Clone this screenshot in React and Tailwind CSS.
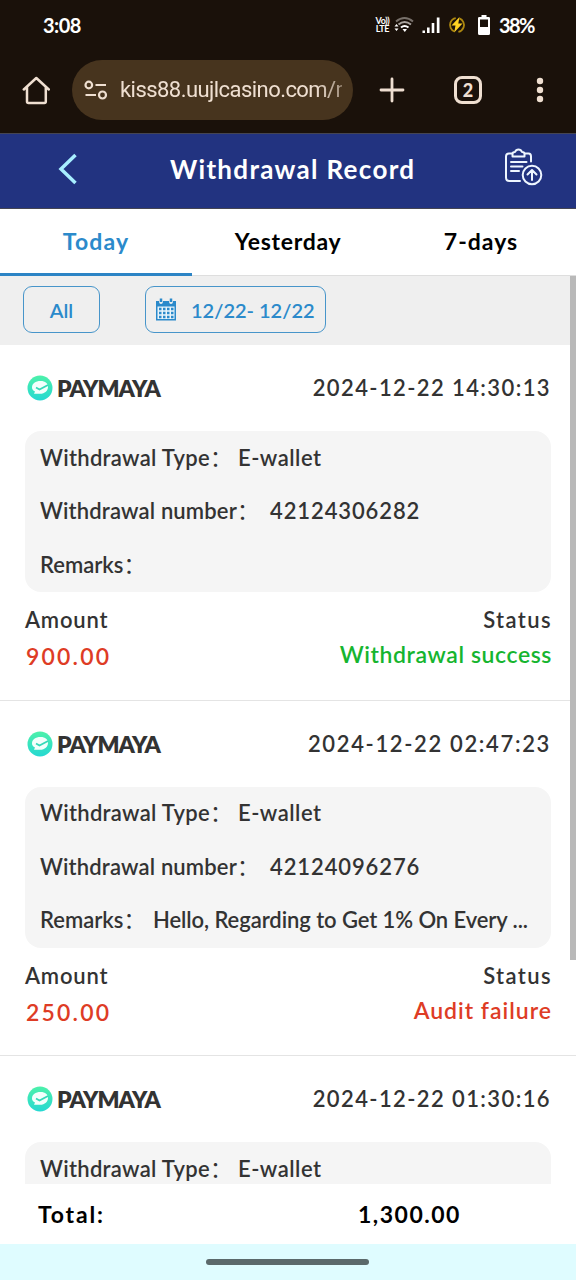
import React from 'react';

const records = [
  {
    time: '2024-12-22 14:30:13',
    timeClass: 'tracking-[1.4px]',
    number: '42124306282',
    remarks: '',
    amount: '900.00',
    status: 'Withdrawal success',
    statusClass: 'text-[#16b52f] tracking-[0.6px]',
  },
  {
    time: '2024-12-22 02:47:23',
    timeClass: 'tracking-[1.65px]',
    number: '42124096276',
    remarks: 'Hello, Regarding to Get 1% On Every ...',
    amount: '250.00',
    status: 'Audit failure',
    statusClass: 'text-[#de3c25] tracking-[1px]',
  },
  {
    time: '2024-12-22 01:30:16',
    timeClass: 'tracking-[1.4px]',
  },
];

const StatusBar = () => (
  <div className="flex h-[50px] shrink-0 items-center justify-between pl-[43px] pr-[42px] text-white">
    <span className="text-[20px] leading-6 font-bold tracking-[-0.5px]">3:08</span>
    <div className="flex items-center">
      <div className="flex w-[17px] flex-col items-center text-[9px] leading-[8px] font-bold tracking-[-0.4px]">
        <span>Vo))</span>
        <span>LTE</span>
      </div>
      <svg className="ml-[3px]" width="20" height="18" viewBox="0 0 20 18" fill="none" strokeWidth="2">
        <path d="M2 5.500Q10.500-1.500 19 5.500" stroke="#77706a" />
        <path d="M4.500 8.500Q10.500 3.500 17 8.500" stroke="#aaa49f" />
        <path d="M7 11.500Q10.500 8.500 14.500 11.500" stroke="#fff" />
        <path d="M8.500 13h4.500l-2.200 3z" fill="#fff" />
        <path d="M0.500 10.500 2.500 8l2 2.500zM0.500 12.500h4l-2 2.500z" fill="#fff" />
      </svg>
      <svg className="ml-[8px]" width="18" height="17" viewBox="0 0 18 17" fill="#fff">
        <path d="M0.500 13.500h2.500V16H0.500zM5 10.500h2.600V16H5zM9.700 6h2.600v10H9.700zM14.800 0.500h2.700V16h-2.700z" />
      </svg>
      <svg className="ml-[8px]" width="18" height="18" viewBox="0 0 18 18">
        <circle cx="9" cy="9" r="7" fill="none" stroke="#ae8810" strokeWidth="1.800" strokeDasharray="18 4" transform="rotate(-70 9 9)" />
        <path d="m11.500 1-8 8.500h4L6.200 16.500l8.300-9h-4.200z" fill="#ffd323" />
      </svg>
      <svg className="ml-[11px]" width="14" height="20" viewBox="0 0 14 20">
        <path d="M4.500 0h5v2h2.300q1.200 0 1.200 1.200v15.300q0 1.500-1.500 1.500h-9Q1 20 1 18.500V3.200Q1 2 2.200 2h2.300z" fill="#fff" />
        <path d="M3 4.500h8V12H3z" fill="#1a110a" />
      </svg>
      <span className="ml-[8px] text-[20px] leading-6 font-bold tracking-[-1.5px]">38%</span>
    </div>
  </div>
);

const BrowserBar = () => (
  <div className="flex h-[83px] shrink-0 items-start px-[22px] pt-[10px] text-[#efdfd1]">
    <svg className="mt-[16px]" width="28" height="29" viewBox="0 0 28 29" fill="none" stroke="currentColor" strokeWidth="2.500" strokeLinejoin="round" strokeLinecap="round">
      <path d="M1.800 13.500 14.300 2l12.500 11.500M5 11v14.500Q5 27 6.500 27h15.800q1.500 0 1.500-1.500V11" />
    </svg>
    <div className="ml-[22px] flex h-[60px] w-[281px] items-center rounded-full bg-[#47341e] pl-[12px] pr-[11px]">
      <svg className="shrink-0" width="24" height="20" viewBox="0 0 24 20" fill="none" stroke="currentColor" strokeWidth="2.200">
        <circle cx="4.800" cy="5" r="3.300" />
        <path d="M11.500 5H22M1.500 15h10.500" />
        <circle cx="18.500" cy="15" r="3.500" />
      </svg>
      <div className="ml-[12px] overflow-hidden font-[Roboto,sans-serif] text-[22px] leading-8 tracking-[-0.55px] whitespace-nowrap [mask-image:linear-gradient(to_right,#000_88%,#0008)]">
        kiss88.uujlcasino.com/m
      </div>
    </div>
    <svg className="mt-[17px] ml-[26px]" width="26" height="26" viewBox="0 0 26 26" fill="none" stroke="currentColor" strokeWidth="2.800" strokeLinecap="round">
      <path d="M13 2v22M2 13h22" />
    </svg>
    <div className="mt-[16px] ml-[49px] flex size-[28px] items-center justify-center rounded-[8px] border-[3px] border-current text-[18px] font-black">
      2
    </div>
    <svg className="mt-[17px] ml-[54px]" width="8" height="27" viewBox="0 0 8 27" fill="currentColor">
      <circle cx="4" cy="4" r="3.200" />
      <circle cx="4" cy="13" r="3.200" />
      <circle cx="4" cy="22" r="3.200" />
    </svg>
  </div>
);

const PageHeader = () => (
  <div className="flex h-[76px] shrink-0 items-center border-y border-[#454552] bg-[#223380] pb-[4px] text-white">
    <svg className="ml-[57px]" width="21" height="32" viewBox="0 0 21 32" fill="none" stroke="#a8efff" strokeWidth="3.500">
      <path d="M18.500 2 4 16l14.500 14" />
    </svg>
    <h1 className="ml-[92px] w-[250px] text-[26px] leading-8 font-bold tracking-[1.3px] whitespace-nowrap">Withdrawal Record</h1>
    <svg className="mb-[4px] ml-[84px]" width="39" height="38" viewBox="0 0 39 38" fill="none" stroke="#eef6ff" strokeWidth="2" strokeLinecap="round" strokeLinejoin="round">
      <path d="M8 5.500H5Q2 5.500 2 8.500v21q0 3.500 3.500 3.500H16M21 5.500h3.500q2.500 0 2.500 3v5" />
      <path d="M8.500 8.500V6q0-2 2.500-2 1-2.500 3.500-2.500T18 4q2.500 0 2.500 2v2.500z" />
      <path d="M7 14h15.500M7 18.500h11.500M7 23h8" />
      <circle cx="28" cy="27" r="9.300" />
      <path d="M28 32v-9.500M23.500 26.500 28 22l4.500 4.500" />
    </svg>
  </div>
);

const Tabs = () => (
  <div className="grid h-[67px] shrink-0 grid-cols-3 border-b border-[#dedede] bg-white text-center text-[23px] font-bold text-black">
    <div className="-mb-px border-b-[3px] border-[#2c84c5] pt-[16px] leading-8 tracking-[1.1px] text-[#2b8acb]">Today</div>
    <div className="pt-[16px] leading-8 tracking-[0.7px]">Yesterday</div>
    <div className="pt-[16px] pl-[2px] leading-8 tracking-[1px]">7-days</div>
  </div>
);

const Filters = () => (
  <div className="flex h-[69px] shrink-0 items-start bg-[#efefef] pt-[10px] pl-[23px] text-[20px] font-semibold text-[#2b8acb]">
    <div className="flex h-[47px] w-[77px] items-center justify-center rounded-[9px] border border-[#4795ca]">All</div>
    <div className="ml-[45px] flex h-[47px] w-[181px] items-center rounded-[9px] border border-[#4795ca] pl-[9px]">
      <svg className="shrink-0" width="22" height="25" viewBox="0 0 22 25">
        <path d="M1 4h3q0 3 2 3t2-3h6q0 3 2 3t2-3h3v19.500H1z" fill="#2b8acb" />
        <path d="M6 1.500v3.500M16 1.500v3.500" stroke="#2b8acb" strokeWidth="2.500" />
        <path d="M2.500 9.500h17V22h-17z" fill="#e8f4fb" />
        <path d="M4 12h14.500M4 16h14.500M4 20h14.500" stroke="#2b8acb" strokeWidth="2.500" strokeDasharray="2.500 1.500" />
      </svg>
      <span className="ml-[14px] whitespace-nowrap">12/22- 12/22</span>
    </div>
  </div>
);

const WalletLogo = () => (
  <svg width="26" height="26" viewBox="0 0 26 26">
    <defs>
      <linearGradient id="wallet" x2="0" y2="1">
        <stop stopColor="#4df1aa" />
        <stop offset="1" stopColor="#25d8d2" />
      </linearGradient>
    </defs>
    <circle cx="13" cy="13" r="12.500" fill="url(#wallet)" />
    <path d="M13.500 6c5 0 7.500 2.500 7.500 6s-3 6.800-8 6.800H7l1-2.300c-2-.8-3-2.300-3-4C5 8.500 8.500 6 13.500 6z" fill="#f2fffc" />
    <path d="m9 12.500 3.500 2L21 10" fill="none" stroke="#36d9b8" strokeWidth="1.800" />
  </svg>
);

const Colon = () => <span className="font-normal">：</span>;

const Record = ({ record }) => (
  <div className="h-[355.500px] shrink-0 border-b border-[#e4e4e4] px-[25px] text-[22px] leading-7 font-semibold text-[#333]">
    <div className="flex h-[86px] items-center justify-between pl-[2px]">
      <div className="flex items-center gap-[4px]">
        <WalletLogo />
        <span className="text-[23px] font-extrabold tracking-[-1px]">PAYMAYA</span>
      </div>
      <span className={`whitespace-nowrap ${record.timeClass}`}>{record.time}</span>
    </div>
    <div className="flex h-[161px] flex-col rounded-[16px] bg-[#f5f5f5] pl-[15px] whitespace-nowrap">
      <div className="flex h-[53.500px] items-center">
        <span className="w-[198px] shrink-0 tracking-[0.3px]">Withdrawal Type<Colon /></span>
        <span className="tracking-[0.5px]">E-wallet</span>
      </div>
      {record.number && (
        <>
          <div className="flex h-[53.500px] items-center">
            <span className="w-[230px] shrink-0 tracking-[0.15px]">Withdrawal number<Colon /></span>
            <span className="tracking-[0.9px]">{record.number}</span>
          </div>
          <div className="flex h-[53.500px] items-center">
            <span className="w-[113px] shrink-0">Remarks<Colon /></span>
            <span className="tracking-[-0.08px]">{record.remarks}</span>
          </div>
        </>
      )}
    </div>
    {record.status && (
      <div className="flex justify-between pt-[14px]">
        <div>
          <div className="tracking-[0.8px]">Amount</div>
          <div className="pt-[8px] pl-px text-[23px] tracking-[2.2px] text-[#de3c25]">{record.amount}</div>
        </div>
        <div className="-mr-px text-right">
          <div className="tracking-[1.4px]">Status</div>
          <div className={`pt-[6px] text-[23px] ${record.statusClass}`}>{record.status}</div>
        </div>
      </div>
    )}
  </div>
);

export default function App() {
  return (
    <div className="flex h-[1280px] w-[576px] flex-col overflow-hidden bg-[#1a110a] font-[Lato,'Noto_Sans_CJK_SC',sans-serif]">
      <StatusBar />
      <BrowserBar />
      <PageHeader />
      <Tabs />
      <div className="relative flex h-[908px] shrink-0 flex-col overflow-hidden bg-white">
        <Filters />
        {records.map((record) => (
          <Record key={record.time} record={record} />
        ))}
        <div className="absolute top-0 right-0 h-[684px] w-[6px] bg-[#b9b9b9]" />
      </div>
      <div className="flex h-[60px] shrink-0 items-center bg-white pl-[38px] text-[23px] font-bold text-black">
        <span className="w-[320px] tracking-[1.8px]">Total:</span>
        <span className="tracking-[1.500px]">1,300.00</span>
      </div>
      <div className="flex h-[36px] shrink-0 items-center justify-center bg-[#dffcff] pr-px">
        <div className="h-[6px] w-[163px] rounded-full bg-[#5b696b]" />
      </div>
    </div>
  );
}
